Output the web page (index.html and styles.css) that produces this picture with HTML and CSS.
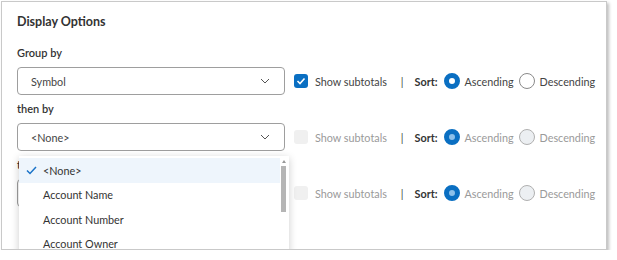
FILE: index.html
```html
<!DOCTYPE html>
<html lang="en">
<head>
  <meta charset="UTF-8">
  <title>Display Options</title>
  <link rel="stylesheet" href="styles.css">
</head>
<body>
  <div class="panel">
    <h2 class="title">Display Options</h2>

    <div class="group">
      <label class="group-label">Group by</label>
      <div class="row">
        <div class="select">
          <span>Symbol</span>
          <svg class="chev" width="10" height="6" viewBox="0 0 10 6"><path d="M1 1l4 4 4-4" fill="none" stroke="#555" stroke-width="1"/></svg>
        </div>
        <span class="check on">
          <svg width="10" height="8" viewBox="0 0 10 8"><path d="M1.5 4l2.5 2.5 4.5-5" fill="none" stroke="#fff" stroke-width="1.6"/></svg>
        </span>
        <span class="opt">Show subtotals</span>
        <span class="sep">|</span>
        <span class="sort">Sort:</span>
        <span class="radio on"></span>
        <span class="opt">Ascending</span>
        <span class="radio"></span>
        <span class="opt">Descending</span>
      </div>
    </div>

    <div class="group">
      <label class="group-label">then by</label>
      <div class="row disabled">
        <div class="select">
          <span>&lt;None&gt;</span>
          <svg class="chev" width="10" height="6" viewBox="0 0 10 6"><path d="M1 1l4 4 4-4" fill="none" stroke="#555" stroke-width="1"/></svg>
        </div>
        <span class="check"></span>
        <span class="opt">Show subtotals</span>
        <span class="sep">|</span>
        <span class="sort">Sort:</span>
        <span class="radio on"></span>
        <span class="opt">Ascending</span>
        <span class="radio"></span>
        <span class="opt">Descending</span>
      </div>
    </div>

    <div class="group">
      <label class="group-label">then by</label>
      <div class="row disabled">
        <div class="select">
          <span>&lt;None&gt;</span>
          <svg class="chev" width="10" height="6" viewBox="0 0 10 6"><path d="M1 1l4 4 4-4" fill="none" stroke="#555" stroke-width="1"/></svg>
        </div>
        <span class="check"></span>
        <span class="opt">Show subtotals</span>
        <span class="sep">|</span>
        <span class="sort">Sort:</span>
        <span class="radio on"></span>
        <span class="opt">Ascending</span>
        <span class="radio"></span>
        <span class="opt">Descending</span>
      </div>
    </div>

    <!-- open list of the second select -->
    <div class="dropdown">
      <ul class="list">
        <li class="item selected">
          <svg class="tick" width="11" height="9" viewBox="0 0 11 9"><path d="M1 4.5l3 3 6-6.5" fill="none" stroke="#1a73c8" stroke-width="1.5"/></svg>
          &lt;None&gt;
        </li>
        <li class="item">Account Name</li>
        <li class="item">Account Number</li>
        <li class="item">Account Owner</li>
      </ul>
      <div class="scrollbar">
        <span class="arrow"></span>
        <span class="thumb"></span>
      </div>
    </div>
  </div>
</body>
</html>
```

FILE: styles.css
```css
body {
  margin: 0;
  background-color: #ffffff;
  font-family: Lato, "Open Sans", sans-serif;
  color: #333333;
}

.panel {
  position: relative;
  box-sizing: border-box;
  width: 606px;
  height: 249px;
  margin: 1px 0 0 1px;
  padding: 11px 10px 0 15px;
  border: 1px solid #c9c9c9;
  box-shadow: 2px 2px 3px rgba(0, 0, 0, 0.25);
  overflow: hidden;
  background-color: #ffffff;
}

.title {
  margin: 0 0 14px 0;
  font-size: 12.5px;
  line-height: 18px;
  font-weight: 700;
  color: #333333;
}

.group {
  display: flex;
  flex-direction: column;
  gap: 6px;
  margin-bottom: 6px;
}

.group-label {
  font-size: 11px;
  line-height: 16px;
  font-weight: 600;
  color: #333333;
}

.row {
  display: flex;
  align-items: center;
  font-size: 10.8px;
  white-space: nowrap;
}

.row > * {
  flex-shrink: 0;
}

.select {
  box-sizing: border-box;
  width: 268px;
  height: 28px;
  display: flex;
  align-items: center;
  justify-content: space-between;
  padding: 0 14px 0 13px;
  border: 1px solid #9e9e9e;
  border-radius: 4px;
  color: #444444;
}

.check {
  box-sizing: border-box;
  width: 14px;
  height: 14px;
  margin-left: 9px;
  margin-right: 7px;
  border-radius: 3px;
  background-color: #f0f0f0;
  display: flex;
  align-items: center;
  justify-content: center;
}

.check.on {
  background-color: #0a6fc2;
}

.opt {
  color: #444444;
}

.sep {
  margin: 0 11px 0 14px;
  color: #444444;
}

.sort {
  font-weight: 700;
  color: #333333;
  margin-right: 6px;
}

.radio {
  box-sizing: border-box;
  width: 16px;
  height: 16px;
  margin-right: 5px;
  border-radius: 50%;
  border: 1px solid #8a8a8a;
  background-color: #ffffff;
}

.radio.on {
  border: 5px solid #0a6fc2;
}

.radio + .opt + .radio {
  margin-left: 5px;
}

.disabled .opt {
  color: #9a9a9a;
}

.disabled .radio {
  background-color: #eceff2;
  border-color: #b0b0b0;
}

.disabled .radio.on {
  border-color: #0a6fc2;
  background-color: #8cc0ea;
}

.dropdown {
  position: absolute;
  left: 17px;
  top: 154px;
  width: 270px;
  height: 110px;
  display: flex;
  background-color: #ffffff;
  box-shadow: 0 2px 8px rgba(0, 0, 0, 0.2);
}

.list {
  flex: 1;
  margin: 0;
  padding: 2px 0 0 0;
  list-style: none;
  font-size: 10.8px;
  color: #333333;
}

.item {
  height: 24.5px;
  display: flex;
  align-items: center;
  padding-left: 24px;
  position: relative;
}

.item.selected {
  background-color: #eef5fc;
}

.tick {
  position: absolute;
  left: 7px;
  top: 8px;
}

.scrollbar {
  width: 7px;
  margin-right: 2px;
  padding-top: 4px;
  display: flex;
  flex-direction: column;
  align-items: center;
  gap: 3px;
}

.arrow {
  width: 0;
  height: 0;
  border-left: 2px solid transparent;
  border-right: 2px solid transparent;
  border-bottom: 3px solid #999999;
}

.thumb {
  width: 5px;
  height: 46px;
  background-color: #b5b5b5;
}
```
